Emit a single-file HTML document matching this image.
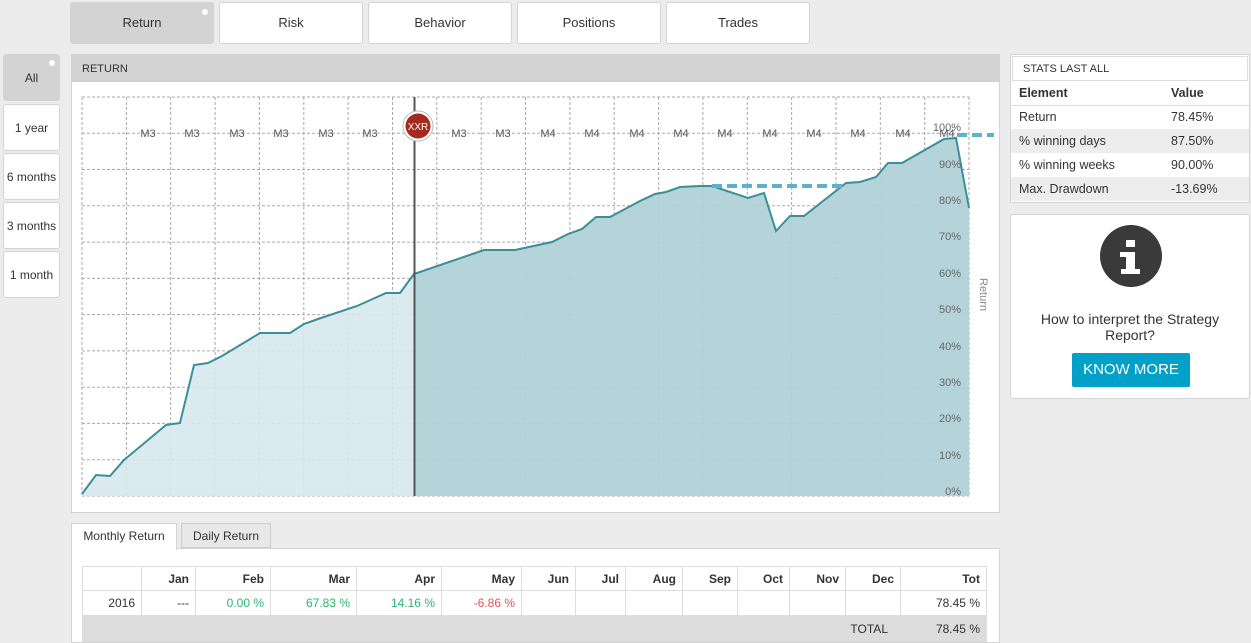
<!DOCTYPE html>
<html><head><meta charset="utf-8"><style>
*{box-sizing:border-box;margin:0;padding:0}
body{width:1251px;height:643px;background:#ececec;font-family:"Liberation Sans",Arial,sans-serif;position:relative;overflow:hidden;color:#333}
.abs{position:absolute}
.tab{position:absolute;top:2px;height:42px;width:144px;background:#fff;border:1px solid #d4d4d4;border-radius:3px;font-size:13px;text-align:center;line-height:40px;color:#333}
.tab.act{background:#d3d3d3}
.side{position:absolute;left:3px;width:57px;height:47px;background:#fff;border:1px solid #d4d4d4;border-radius:3px;font-size:12px;text-align:center;line-height:46px}
.dot{position:absolute;width:6px;height:6px;border-radius:3px;background:#fff}
table{border-collapse:collapse}
.st td{font-size:12.5px;padding:0 8px;height:24px}
.mt td{border:1px solid #ddd;font-size:12px;text-align:right;padding:0 6px;height:24px}
</style></head><body>
<div class="tab act" style="left:70px">Return<div class="dot" style="right:5px;top:6px"></div></div>
<div class="tab" style="left:219px">Risk</div>
<div class="tab" style="left:368px">Behavior</div>
<div class="tab" style="left:517px">Positions</div>
<div class="tab" style="left:666px">Trades</div>

<div class="side" style="top:54px;background:#d3d3d3;">All<div class="dot" style="right:4px;top:5px"></div></div>
<div class="side" style="top:104px">1 year</div>
<div class="side" style="top:153px">6 months</div>
<div class="side" style="top:202px">3 months</div>
<div class="side" style="top:251px">1 month</div>

<div class="abs" style="left:71px;top:54px;width:929px;height:459px;background:#fff;border:1px solid #d4d4d4"></div>
<div class="abs" style="left:71px;top:54px;width:929px;height:28px;background:#d3d3d3;font-size:11px;padding:9px 0 0 11px;color:#333">RETURN</div>

<svg class="abs" style="left:71px;top:81px" width="929" height="431" viewBox="71 81 929 431">
<g stroke="#aaa" stroke-dasharray="3,2" stroke-width="1" fill="none">
<path d="M82 97V496M126.4 97V496M170.7 97V496M215.1 97V496M259.4 97V496M303.8 97V496M348.1 97V496M392.5 97V496M436.8 97V496M481.2 97V496M525.5 97V496M569.9 97V496M614.2 97V496M658.6 97V496M702.9 97V496M747.3 97V496M791.6 97V496M836 97V496M880.3 97V496M924.7 97V496M969 97V496"/>
<path d="M82 97H969M82 133.3H969M82 169.5H969M82 205.8H969M82 242.1H969M82 278.4H969M82 314.6H969M82 350.9H969M82 387.2H969M82 423.4H969M82 459.7H969M82 496H969"/>
</g>
<path d="M82,494 96,475 110,476 124,460 166,425 180,423 194,365 208,363 222,356 260,333 290,333 304,324 318,319 357,306 386,293 400,293 414,274 L414,496 82,496Z" fill="#d7e8ec" opacity=".9"/>
<path d="M414,274 484,250 515,250 552,242 568,234 582,229 596,217 610,217 640,201 655,194 666,192 680,187 700,186 712,186 748,198 764,193 776,231 790,216 804,216 846,183 860,182 876,177 888,163 902,163 944,139 956,138 969,208 L969,496 414,496Z" fill="#b0d2d7" opacity=".95"/>
<path d="M82,494 96,475 110,476 124,460 166,425 180,423 194,365 208,363 222,356 260,333 290,333 304,324 318,319 357,306 386,293 400,293 414,274 484,250 515,250 552,242 568,234 582,229 596,217 610,217 640,201 655,194 666,192 680,187 700,186 712,186 748,198 764,193 776,231 790,216 804,216 846,183 860,182 876,177 888,163 902,163 944,139 956,138 969,208" fill="none" stroke="#3c8e98" stroke-width="2"/>
<line x1="414.5" y1="97" x2="414.5" y2="496" stroke="#555" stroke-width="2"/>
<g stroke="#5ab3c9" stroke-width="4" stroke-dasharray="10,5"><line x1="712" y1="186" x2="846" y2="186"/><line x1="957" y1="135" x2="994" y2="135"/></g>
<g font-size="11" fill="#555" text-anchor="middle" font-family="Liberation Sans,sans-serif">
<text x="148" y="137">M3</text><text x="192" y="137">M3</text><text x="237" y="137">M3</text><text x="281" y="137">M3</text><text x="326" y="137">M3</text><text x="370" y="137">M3</text><text x="459" y="137">M3</text><text x="503" y="137">M3</text><text x="548" y="137">M4</text><text x="592" y="137">M4</text><text x="637" y="137">M4</text><text x="681" y="137">M4</text><text x="725" y="137">M4</text><text x="770" y="137">M4</text><text x="814" y="137">M4</text><text x="858" y="137">M4</text><text x="903" y="137">M4</text><text x="947" y="137">M4</text>
</g>
<g font-size="11" fill="#666" text-anchor="end" font-family="Liberation Sans,sans-serif">
<text x="961" y="131">100%</text><text x="961" y="168">90%</text><text x="961" y="204">80%</text><text x="961" y="240">70%</text><text x="961" y="277">60%</text><text x="961" y="313">50%</text><text x="961" y="350">40%</text><text x="961" y="386">30%</text><text x="961" y="422">20%</text><text x="961" y="459">10%</text><text x="961" y="495">0%</text>
</g>
<text x="0" y="0" font-size="11" fill="#888" transform="translate(980,278) rotate(90)" font-family="Liberation Sans,sans-serif">Return</text>
<circle cx="418" cy="126" r="15" fill="#fff" stroke="#bbb"/>
<circle cx="418" cy="126" r="12.5" fill="#a52a1e"/>
<text x="418" y="130" font-size="10" fill="#fff" text-anchor="middle" font-family="Liberation Sans,sans-serif">XXR</text>
</svg>

<div class="abs" style="left:1010px;top:54px;width:240px;height:149px;background:#fff;border:1px solid #d4d4d4"></div>
<div class="abs" style="left:1012px;top:56px;width:236px;height:25px;border:1px solid #ddd;font-size:11px;padding:6px 0 0 10px">STATS LAST ALL</div>
<table class="st abs" style="left:1011px;top:81px;width:238px">
<tr style="border-bottom:1px solid #ddd"><td style="font-weight:bold;width:152px">Element</td><td style="font-weight:bold">Value</td></tr>
<tr><td>Return</td><td>78.45%</td></tr>
<tr style="background:#ededed"><td>% winning days</td><td>87.50%</td></tr>
<tr><td>% winning weeks</td><td>90.00%</td></tr>
<tr style="background:#ededed"><td>Max. Drawdown</td><td>-13.69%</td></tr>
</table>

<div class="abs" style="left:1010px;top:214px;width:240px;height:185px;background:#fff;border:1px solid #d4d4d4;border-radius:3px"></div>
<div class="abs" style="left:1100px;top:225px;width:62px;height:62px;border-radius:31px;background:#3a3a3a"></div>
<svg class="abs" style="left:1100px;top:225px" width="62" height="62"><path d="M26 15h9v7h-9zM20 27h15v17h5v5H21v-5h5V32h-6z" fill="#fff"/></svg>
<div class="abs" style="left:1011px;top:311px;width:238px;text-align:center;font-size:14px;line-height:16px;color:#333">How to interpret the Strategy<br>Report?</div>
<div class="abs" style="left:1072px;top:353px;width:118px;height:34px;background:#00a0c8;border-radius:2px;color:#fff;font-size:15px;text-align:center;line-height:34px">KNOW MORE</div>

<div class="abs" style="left:71px;top:548px;width:929px;height:95px;background:#fff;border:1px solid #d4d4d4"></div>
<div class="abs" style="left:71px;top:523px;width:106px;height:27px;background:#fff;border:1px solid #d4d4d4;border-bottom:none;font-size:12px;line-height:25px;text-align:center">Monthly Return</div>
<div class="abs" style="left:181px;top:523px;width:90px;height:25px;background:#e8e8e8;border:1px solid #ccc;font-size:12px;line-height:24px;text-align:center">Daily Return</div>
<table class="mt abs" style="left:82px;top:566px;width:905px">
<tr style="font-weight:bold"><td style="width:59px"></td><td style="width:54px">Jan</td><td style="width:75px">Feb</td><td style="width:86px">Mar</td><td style="width:85px">Apr</td><td style="width:80px">May</td><td style="width:54px">Jun</td><td style="width:50px">Jul</td><td style="width:57px">Aug</td><td style="width:55px">Sep</td><td style="width:52px">Oct</td><td style="width:56px">Nov</td><td style="width:55px">Dec</td><td>Tot</td></tr>
<tr style="height:25px"><td>2016</td><td>---</td><td style="color:#2bb673">0.00 %</td><td style="color:#2bb673">67.83 %</td><td style="color:#2bb673">14.16 %</td><td style="color:#e05555">-6.86 %</td><td></td><td></td><td></td><td></td><td></td><td></td><td></td><td>78.45 %</td></tr>
<tr style="background:#dcdcdc;height:26px"><td colspan="13" style="padding-right:12px">TOTAL</td><td>78.45 %</td></tr>
</table>
</body></html>
